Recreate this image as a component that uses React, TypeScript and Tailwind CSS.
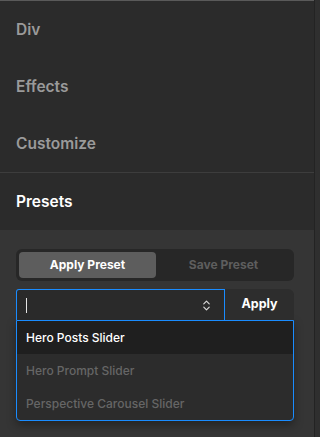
import { ChevronsUpDown } from 'lucide-react'

const sections = ['Div', 'Effects', 'Customize']

const presets = ['Hero Posts Slider', 'Hero Prompt Slider', 'Perspective Carousel Slider']

export default function App() {
  return (
    <div
      className="flex h-[437px] w-[320px] overflow-hidden bg-[#2b2b2b]"
      style={{ fontFamily: 'Inter, "Noto Sans", sans-serif' }}
    >
      <div className="flex w-[314px] flex-col">
        <div className="h-[1px] bg-[#5a5a5a]" />

        {sections.map((s) => (
          <div
            key={s}
            className="flex h-[57px] items-center px-4 text-[15.5px] font-semibold text-[#9a9a9a]"
          >
            {s}
          </div>
        ))}

        <div className="h-[1px] bg-[#3d3d3d]" />

        {/* Presets */}
        <div className="flex h-[57px] items-center px-4 text-[15.5px] font-semibold text-white">
          Presets
        </div>

        <div className="flex-1 bg-[#353535] pl-4 pr-5 pt-[19px]">
          <div className="flex h-[32px] rounded-md bg-[#272727] p-[3px] text-[12px] font-bold">
            <div className="flex w-[137px] items-center justify-center rounded-[4px] bg-[#5d5d5d] text-white">
              Apply Preset
            </div>
            <div className="flex flex-1 items-center justify-center text-[#5e5e5e]">
              Save Preset
            </div>
          </div>

          <div className="mt-2 flex h-[31px]">
            <div className="flex w-[209px] items-center justify-between rounded-tl-[3px] border-x border-t border-[#1a8cff] bg-[#2a2a2a] pl-[9px] pr-[11px]">
              <span className="h-[15px] w-[1px] bg-[#e5e5e5]" />
              <ChevronsUpDown size={13} strokeWidth={2.2} className="text-[#d8d8d8]" />
            </div>
            <div className="flex flex-1 items-center justify-center rounded-tr-md bg-[#2d2d2d] text-[12.5px] font-bold text-white">
              Apply
            </div>
          </div>

          <div className="overflow-hidden rounded-b-[4px] border border-[#1a8cff] bg-[#2c2c2c] shadow-[0_4px_10px_rgba(0,0,0,0.35)]">
            {presets.map((p, i) => (
              <div
                key={p}
                className={
                  i === 0
                    ? 'flex h-[33px] items-center bg-[#1f1f1f] px-[9px] text-[12px] font-medium text-white'
                    : 'flex h-[33px] items-center px-[9px] text-[12px] font-medium text-[#666666]'
                }
              >
                {p}
              </div>
            ))}
          </div>
        </div>
      </div>

      <div className="w-[6px] border-l border-[#232323] bg-[#2f2f2f]" />
    </div>
  )
}
